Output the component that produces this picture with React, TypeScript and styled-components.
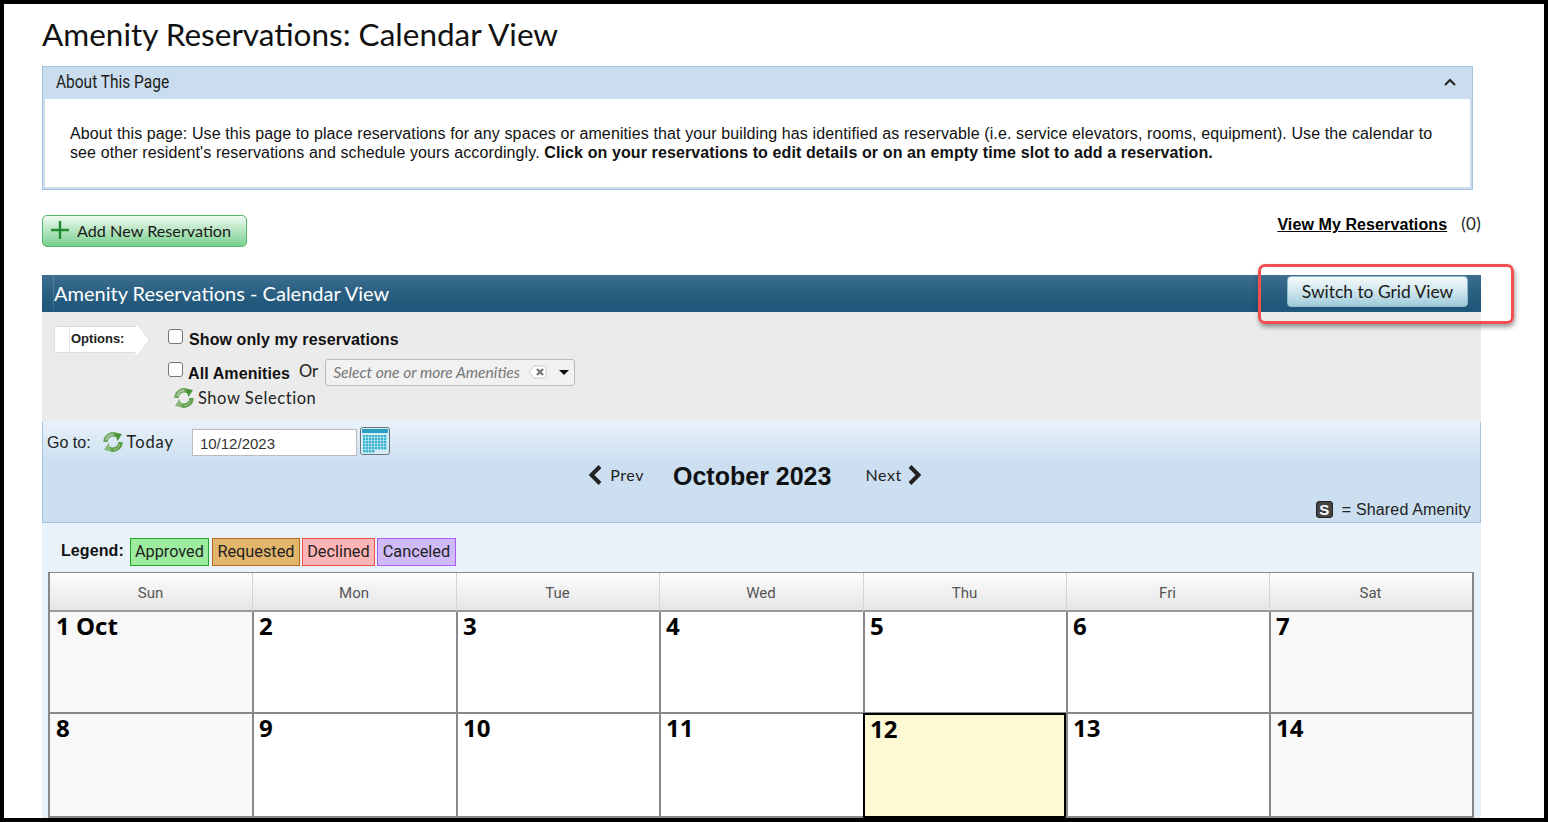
import React from 'react';
import styled, { createGlobalStyle } from 'styled-components';

const GlobalStyle = createGlobalStyle`
  html, body {
    margin: 0;
    padding: 0;
    background: #fff;
    overflow: hidden;
  }
  * {
    box-sizing: border-box;
  }
`;

const Frame = styled.div`
  position: relative;
  width: 1548px;
  height: 822px;
  border: solid 4px #000;
  padding: 0 0 0 38px;
  overflow: hidden;
  background: #fff;
  color: #000;
  font-family: "Liberation Sans", Arial, sans-serif;
`;

const Title = styled.h1`
  margin: 0;
  padding-top: 9px;
  height: 62px;
  font-family: Lato, sans-serif;
  font-size: 31.5px;
  line-height: 42px;
  font-weight: 400;
  color: #111;
`;

const AboutPanel = styled.section`
  width: 1431px;
  height: 124px;
  border: solid 1px #a3c2e2;
  background: #fff;
`;

const AboutHeader = styled.div`
  display: flex;
  align-items: center;
  justify-content: space-between;
  height: 32px;
  padding: 0 15px 2px 13px;
  background: #c9ddef;
  font-family: Roboto, sans-serif;
  font-size: 18px;
  color: #1c1c1c;
`;

const CondensedLabel = styled.span`
  display: inline-block;
  margin-top: -2px;
  transform: scaleX(0.86);
  transform-origin: left center;
`;

const AboutBody = styled.div`
  height: 90px;
  border: solid 2px #c9ddef;
  border-top: none;
  padding: 25px 0 0 25px;
  font-size: 16px;
  line-height: 19px;
  letter-spacing: 0.11px;
  color: #111;
`;

const ActionRow = styled.div`
  display: flex;
  align-items: flex-start;
  justify-content: space-between;
  width: 1439px;
  height: 85px;
  padding-top: 25px;
`;

const AddButton = styled.button`
  display: flex;
  align-items: center;
  gap: 8px;
  width: 205px;
  height: 32px;
  padding: 0 0 2px 8px;
  border: solid 1px #50b866;
  border-radius: 5px;
  background: linear-gradient(to bottom, #f0faf2 0%, #b9e6c3 45%, #79d08f 100%);
  font-family: Lato, sans-serif;
  font-size: 16.2px;
  color: #1a1a1a;
`;

const MyReservations = styled.div`
  display: flex;
  gap: 14px;
  margin-top: -3px;
  font-size: 16px;
  line-height: 24px;
`;

const MyLink = styled.a`
  padding-top: 1px;
  font-weight: 700;
  text-decoration: underline;
  letter-spacing: 0.1px;
  color: #000;
`;

const Count = styled.span`
  font-family: Lato, sans-serif;
  font-size: 17px;
  letter-spacing: 0.3px;
  color: #222;
`;

const Section = styled.section`
  width: 1439px;
  height: 543px;
  background: #e9f1f9;
`;

const SectionHeader = styled.div`
  position: relative;
  display: flex;
  align-items: center;
  justify-content: space-between;
  height: 37px;
  padding: 0 13px 0 12px;
  background: linear-gradient(to bottom, #3d6f90 0%, #2d6284 40%, #1f5578 100%);
  border-bottom: solid 2px #1d5a7c;
  font-family: Lato, sans-serif;
  font-size: 20px;
  color: #fff;
  &::before {
    content: "";
    position: absolute;
    top: 0;
    bottom: 0;
    left: 11px;
    width: 1px;
    background: rgba(255, 255, 255, 0.14);
  }
`;

const SwitchButton = styled.button`
  width: 181px;
  height: 31px;
  margin-top: -3px;
  padding: 0;
  border: solid 1px #8fbccd;
  border-radius: 4px;
  background: linear-gradient(to bottom, #f4f9fb 0%, #d3e8ef 45%, #9fcbdb 100%);
  font-family: Lato, sans-serif;
  font-size: 17.4px;
  color: #1a1a1a;
`;

const Options = styled.div`
  display: flex;
  height: 110px;
  padding: 14px 0 0 12px;
  background: #ebebeb;
`;

const OptionsTag = styled.div`
  position: relative;
  width: 84px;
  height: 27px;
  margin: 0 30px 0 0;
  padding-left: 16px;
  border: solid 1px #dcdcdc;
  border-right: none;
  background: #fff;
  font-size: 13px;
  font-weight: 700;
  line-height: 24px;
  color: #222;
  &::before {
    content: "";
    position: absolute;
    top: 0;
    bottom: 0;
    left: 14px;
    width: 1px;
    background: #e6e6e6;
  }
  &::after {
    content: "";
    position: absolute;
    top: 3px;
    right: -10px;
    width: 19px;
    height: 19px;
    background: #fff;
    border-top: solid 1px #dcdcdc;
    border-right: solid 1px #dcdcdc;
    transform: rotate(45deg) skew(8deg, 8deg);
  }
`;

const OptionsList = styled.div`
  display: flex;
  flex-direction: column;
`;

const OptionLine = styled.div<{ $gap?: number }>`
  display: flex;
  align-items: center;
  height: 26px;
  margin-bottom: ${({ $gap }) => $gap ?? 0}px;
`;

const Check = styled.span`
  width: 15px;
  height: 15px;
  margin: -6px 5px 0 0;
  border: solid 1px #767676;
  border-radius: 3px;
  background: #fff;
`;

const OptionLabel = styled.label<{ $drop: number; $shift?: number }>`
  padding-top: ${({ $drop }) => $drop}px;
  margin-left: ${({ $shift }) => $shift ?? 0}px;
  font-size: 16px;
  font-weight: 700;
  letter-spacing: 0.1px;
  color: #111;
`;

const OrText = styled.span`
  margin: -3px 7px 0 9px;
  font-family: Lato, sans-serif;
  font-size: 16.5px;
  color: #222;
`;

const AmenitySelect = styled.div`
  display: flex;
  align-items: center;
  width: 250px;
  height: 27px;
  padding: 0 8px 0 7px;
  border: solid 1px #bbb;
  border-radius: 3px;
  background: #f1f1f1;
`;

const Placeholder = styled.span`
  font-family: Lato, sans-serif;
  font-size: 15.6px;
  font-style: italic;
  color: #777;
  white-space: nowrap;
`;

const ClearIcon = styled.svg`
  margin-left: 8px;
  flex: none;
`;

const Caret = styled.span`
  width: 0;
  height: 0;
  margin: 0 -3px 0 auto;
  border-left: solid 5px transparent;
  border-right: solid 5px transparent;
  border-top: solid 5px #111;
`;

const RefreshLink = styled.a`
  display: flex;
  align-items: center;
  gap: 4px;
  font-family: Lato, sans-serif;
  font-size: 16.5px;
  letter-spacing: 0.55px;
  color: #222;
`;

const ShowSelectionLine = styled.div`
  padding: 3px 0 0 6px;
`;

const Nav = styled.div`
  height: 101px;
  padding: 4px 9px 0 4px;
  border: solid 1px #a3c2e2;
  border-top: none;
  background: linear-gradient(to bottom, #e8f1f9 0%, #cbdff1 42%, #cbdff1 100%);
`;

const GotoRow = styled.div`
  display: flex;
  align-items: center;
  height: 30px;
  font-size: 16px;
  color: #222;
`;

const GotoLabel = styled.span`
  margin: 3px 12px 0 0;
`;

const TodayLink = styled(RefreshLink)`
  margin-top: 2px;
  letter-spacing: 0.9px;
`;

const DateInput = styled.div`
  width: 165px;
  height: 27px;
  margin: 3px 3px 0 18px;
  padding-left: 7px;
  border: solid 1px #bbb;
  background: #fff;
  font-size: 15px;
  line-height: 27px;
  color: #333;
`;

const MonthRow = styled.div`
  display: flex;
  align-items: center;
  justify-content: center;
  height: 38px;
  margin-top: 1px;
  padding-right: 8px;
`;

const PageLink = styled.a<{ $gap: number }>`
  display: flex;
  align-items: center;
  gap: ${({ $gap }) => $gap}px;
  margin-top: -3px;
  font-family: Lato, sans-serif;
  font-size: 16px;
  letter-spacing: 0.6px;
  color: #222;
`;

const Month = styled.h2`
  margin: 0 34px 0 29px;
  font-size: 25px;
  font-weight: 700;
  color: #111;
`;

const SharedRow = styled.div`
  display: flex;
  align-items: center;
  justify-content: flex-end;
  gap: 9px;
  height: 24px;
  margin-top: 3px;
  font-size: 16px;
  letter-spacing: 0.15px;
  color: #222;
`;

const SharedIcon = styled.span`
  width: 17px;
  height: 17px;
  margin-top: -2px;
  border: solid 1px #222;
  border-radius: 3px;
  background: #444;
  font-size: 15px;
  font-weight: 700;
  line-height: 15px;
  text-align: center;
  color: #fff;
`;

const LegendRow = styled.div`
  display: flex;
  align-items: center;
  height: 49px;
  padding: 9px 0 0 19px;
`;

const LegendLabel = styled.span`
  margin: -2px 6px 0 0;
  font-size: 16px;
  font-weight: 700;
  letter-spacing: 0.1px;
  color: #111;
`;

const LegendChip = styled.span<{ $bg: string; $line: string; $w: number }>`
  width: ${({ $w }) => $w}px;
  height: 28px;
  margin-right: 2px;
  border: solid 1px ${({ $line }) => $line};
  background: ${({ $bg }) => $bg};
  font-family: Roboto, sans-serif;
  font-size: 16.3px;
  line-height: 26px;
  text-align: center;
  color: #222;
  &:nth-child(2) {
    margin-right: 3px;
  }
`;

const Calendar = styled.div`
  display: grid;
  grid-template-columns: 204px 204px 203px 204px 203px 203px 203px;
  grid-template-rows: 39px 102px 104px;
  width: 1426px;
  margin-left: 6px;
  border-top: solid 1px #888;
  border-right: solid 2px #888;
`;

const DayHead = styled.div`
  display: flex;
  align-items: center;
  justify-content: center;
  padding: 3px 1px 0 0;
  border-left: solid 1px #d4d4d4;
  border-bottom: solid 2px #999;
  background: linear-gradient(to bottom, #fcfcfc 0%, #e6e6e6 100%);
  font-family: Roboto, sans-serif;
  font-size: 15px;
  color: #555;
  &:first-child {
    border-left: solid 2px #888;
  }
`;

const DayCell = styled.div<{ $weekend?: boolean; $today?: boolean; $first?: boolean }>`
  padding: ${({ $today }) => ($today ? 2 : 0)}px 0 0 ${({ $first }) => ($first ? 6 : 5)}px;
  border-left: solid 2px #888;
  border-bottom: solid 2px #888;
  background: ${({ $weekend, $today }) => ($today ? '#fef9d5' : $weekend ? '#f8f8f8' : '#fff')};
  font-family: "Open Sans", sans-serif;
  font-size: 24px;
  font-weight: 700;
  line-height: 28px;
  color: #000;
  ${({ $today }) => $today && 'margin-top: -1px; outline: solid 2px #000; outline-offset: -2px;'}
`;

const Annotation = styled.div`
  position: absolute;
  left: 1254px;
  top: 260px;
  width: 256px;
  height: 60px;
  border: solid 3px #f25050;
  border-radius: 7px;
  box-shadow: 1px 3px 5px rgba(0, 0, 0, 0.4);
  pointer-events: none;
`;

const Sync = () => (
  <svg width="20" height="20" viewBox="0 0 20 20">
    <path d="M2.5 10 A7.5 7.5 0 0 1 14 3.5" fill="none" stroke="#6aa75a" strokeWidth="4.4" />
    <path d="M17.5 10 A7.5 7.5 0 0 1 6 16.5" fill="none" stroke="#5ca04c" strokeWidth="4.4" />
    <path d="M11.5 0.5 L19 2 L14.5 9 Z" fill="#4a953c" />
    <path d="M8.5 19.5 L1 18 L5.5 11 Z" fill="#86b878" />
    <path d="M3.4 8 A6.5 6.5 0 0 1 10 2.5" fill="none" stroke="#c4cfc0" strokeWidth="1.4" />
    <path d="M16.6 12 A6.5 6.5 0 0 1 10 17.5" fill="none" stroke="#9cc18f" strokeWidth="1.2" />
  </svg>
);

const Chevron = ({ left }: { left?: boolean }) => (
  <svg width="16" height="22" viewBox="0 0 16 22">
    <path
      d={left ? 'M13 2.5 L4.5 11 L13 19.5' : 'M3 2.5 L11.5 11 L3 19.5'}
      fill="none"
      stroke="#222"
      strokeWidth="4"
    />
  </svg>
);

const CalendarIcon = () => (
  <svg width="30" height="28" viewBox="0 0 30 28">
    <rect x="0.5" y="0.5" width="29" height="27" rx="2" fill="#d4ecf4" stroke="#66757f" />
    <rect x="2" y="2" width="26" height="4" fill="#2e9fc4" />
    {[8, 11, 14, 17, 20, 23].map(y =>
      [3, 6, 9, 12, 15, 18, 21, 24].map(x => (
        <rect key={`${x}-${y}`} x={x} y={y} width="2.4" height="2.4" fill={y === 23 && x > 12 ? '#d4ecf4' : '#38b4cf'} />
      )),
    )}
  </svg>
);

const days = ['Sun', 'Mon', 'Tue', 'Wed', 'Thu', 'Fri', 'Sat'];
const cells = ['1 Oct', '2', '3', '4', '5', '6', '7', '8', '9', '10', '11', '12', '13', '14'];

const App: React.FC = () => (
  <>
    <GlobalStyle />
    <Frame>
      <Title>Amenity Reservations: Calendar View</Title>
      <AboutPanel>
        <AboutHeader>
          <CondensedLabel>About This Page</CondensedLabel>
          <svg width="14" height="10" viewBox="0 0 14 10">
            <path d="M2 8 L7 3 L12 8" fill="none" stroke="#222" strokeWidth="2" />
          </svg>
        </AboutHeader>
        <AboutBody>
          About this page: Use this page to place reservations for any spaces or amenities that your building has
          identified as reservable (i.e. service elevators, rooms, equipment). Use the calendar to
          <br />
          see other resident's reservations and schedule yours accordingly.{' '}
          <b>Click on your reservations to edit details or on an empty time slot to add a reservation.</b>
        </AboutBody>
      </AboutPanel>
      <ActionRow>
        <AddButton>
          <svg width="18" height="18" viewBox="0 0 18 18">
            <path d="M9 0 V18 M0 9 H18" stroke="#1f8a32" strokeWidth="2.4" />
          </svg>
          Add New Reservation
        </AddButton>
        <MyReservations>
          <MyLink>View My Reservations</MyLink>
          <Count>(0)</Count>
        </MyReservations>
      </ActionRow>
      <Section>
        <SectionHeader>
          Amenity Reservations - Calendar View
          <SwitchButton>Switch to Grid View</SwitchButton>
        </SectionHeader>
        <Options>
          <OptionsTag>Options:</OptionsTag>
          <OptionsList>
            <OptionLine $gap={7}>
              <Check />
              <OptionLabel $drop={2} $shift={1}>Show only my reservations</OptionLabel>
            </OptionLine>
            <OptionLine>
              <Check />
              <OptionLabel $drop={3}>All Amenities</OptionLabel>
              <OrText>Or</OrText>
              <AmenitySelect>
                <Placeholder>Select one or more Amenities</Placeholder>
                <ClearIcon width="20" height="14" viewBox="0 0 20 14">
                  <path d="M6 1 H18 V13 H6 L1 7 Z" fill="#fff" stroke="#ccc" />
                  <path d="M9 4 L15 10 M15 4 L9 10" stroke="#777" strokeWidth="2.4" />
                </ClearIcon>
                <Caret />
              </AmenitySelect>
            </OptionLine>
            <ShowSelectionLine>
              <RefreshLink>
                <Sync />
                Show Selection
              </RefreshLink>
            </ShowSelectionLine>
          </OptionsList>
        </Options>
        <Nav>
          <GotoRow>
            <GotoLabel>Go to:</GotoLabel>
            <TodayLink>
              <Sync />
              Today
            </TodayLink>
            <DateInput>10/12/2023</DateInput>
            <CalendarIcon />
          </GotoRow>
          <MonthRow>
            <PageLink $gap={7}>
              <Chevron left />
              Prev
            </PageLink>
            <Month>October 2023</Month>
            <PageLink $gap={5}>
              Next
              <Chevron />
            </PageLink>
          </MonthRow>
          <SharedRow>
            <SharedIcon>S</SharedIcon>= Shared Amenity
          </SharedRow>
        </Nav>
        <LegendRow>
          <LegendLabel>Legend:</LegendLabel>
          <LegendChip $bg="#9ceb9e" $line="#1fa52b" $w={79}>Approved</LegendChip>
          <LegendChip $bg="#e2b56c" $line="#b8651f" $w={88}>Requested</LegendChip>
          <LegendChip $bg="#ffb5b5" $line="#ee4b4b" $w={73}>Declined</LegendChip>
          <LegendChip $bg="#d0bbfa" $line="#a85cf0" $w={79}>Canceled</LegendChip>
        </LegendRow>
        <Calendar>
          {days.map(d => <DayHead key={d}>{d}</DayHead>)}
          {cells.map((c, i) => (
            <DayCell key={c} $weekend={i % 7 === 0 || i % 7 === 6} $today={c === '12'} $first={i % 7 === 0}>
              {c}
            </DayCell>
          ))}
        </Calendar>
      </Section>
      <Annotation />
    </Frame>
  </>
);

export default App;
